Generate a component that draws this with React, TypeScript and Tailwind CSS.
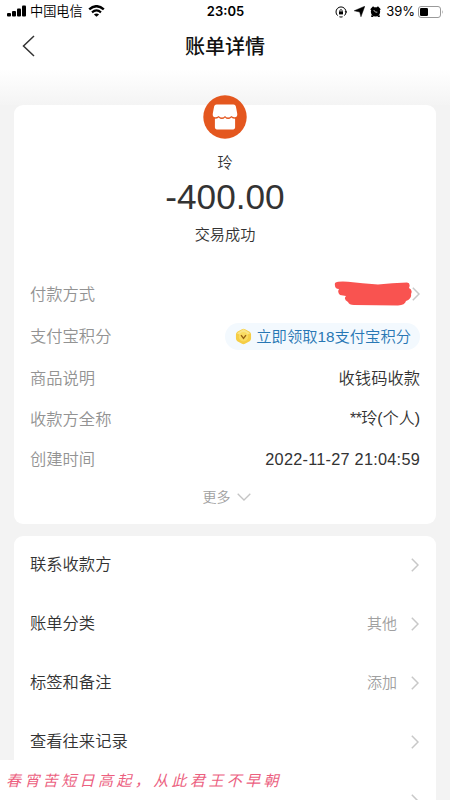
import React from "react";

type ChevronProps = { className?: string };

const Chevron: React.FC<ChevronProps> = ({ className = "" }) => (
  <svg viewBox="0 0 8 14" fill="none" className={`h-[14px] w-2 shrink-0 ${className}`}>
    <path d="M0.8 0.8 L7 7 L0.8 13.2" stroke="#c8c8c8" strokeWidth="1.5" />
  </svg>
);

const StatusBar: React.FC = () => (
  <div className="flex h-[23px] items-center text-black">
    <div className="flex flex-1 items-center pl-[7px]">
      <svg viewBox="0 0 19 12" className="h-3 w-[19px]">
        <rect x="0" y="8" width="4" height="3.5" rx="1" />
        <rect x="5" y="6" width="4" height="5.5" rx="1" />
        <rect x="10" y="3.5" width="4" height="8" rx="1" />
        <rect x="15" y="0.5" width="4" height="11" rx="1" />
      </svg>
      <span className="ml-1 text-[13.2px] font-[350] leading-none">中国电信</span>
      <svg viewBox="0 0 17 12" className="ml-[5px] h-3 w-[17px]" fill="none" stroke="black">
        <path d="M1.2 4.4 Q8.5 -2 15.8 4.4" strokeWidth="2.4" />
        <path d="M4 7.3 Q8.5 3.5 13 7.3" strokeWidth="2.2" />
        <path d="M8.5 11.8 L5.9 9.4 Q8.5 7.4 11.1 9.4 Z" fill="black" stroke="none" />
      </svg>
    </div>
    <span className="font-['Inter','Liberation_Sans',sans-serif] text-[13px] font-semibold leading-none">
      23:05
    </span>
    <div className="flex flex-1 items-center justify-end pr-[6px]">
      <svg viewBox="0 0 12 12" className="h-3 w-3" fill="none" stroke="black">
        <path d="M2.6 9.6 A5 5 0 1 1 9.4 9.6" strokeWidth="1" />
        <path d="M4.4 10.8 Q6 11.3 7.6 10.8" strokeWidth="1" />
        <path d="M4.8 5.6 V4.8 a1.2 1.2 0 0 1 2.4 0 V5.6" strokeWidth="0.8" />
        <rect x="4" y="5.4" width="4" height="3" fill="black" stroke="none" />
        <path d="M10 5 L11.2 6.6 L12 5" strokeWidth="0.8" />
      </svg>
      <svg viewBox="0 0 12 12" className="ml-[7px] h-[11px] w-[11px]">
        <path d="M11.8 0.2 L7.6 11.8 L6.2 6.6 L0.2 5.2 Z" stroke="black" strokeWidth="0.5" />
      </svg>
      <svg viewBox="0 0 12 12" className="ml-[5px] h-[11px] w-[11px]">
        <circle cx="6" cy="6.4" r="5.1" />
        <path d="M0.3 3.6 L3.3 0.3 L5 1.6 L1.4 5 Z M11.7 3.6 L8.7 0.3 L7 1.6 L10.6 5 Z" />
        <path d="M1.8 9.2 L1.2 12 H4 Z M10.2 9.2 L10.8 12 H8 Z" />
        <path d="M4 4.4 L6 6.7 H8" fill="none" stroke="white" strokeWidth="0.8" />
      </svg>
      <span className="ml-[5px] font-['Inter','Liberation_Sans',sans-serif] text-[13px] leading-none">
        39%
      </span>
      <svg viewBox="0 0 26 12" className="ml-[3px] h-3 w-[26px]" fill="none">
        <rect x="0.5" y="0.5" width="22" height="11" rx="2.5" stroke="#9a9a9a" />
        <rect x="2" y="2" width="8" height="8" rx="1.3" fill="black" />
        <path d="M24.3 4 Q25.8 6 24.3 8 Z" fill="#9a9a9a" />
      </svg>
    </div>
  </div>
);

const NavBar: React.FC = () => (
  <div className="flex h-[46px] items-center px-[22px]">
    <svg viewBox="0 0 13 22" fill="none" className="h-[22px] w-[13px]">
      <path d="M12 1 L1.5 11 L12 21" stroke="#333" strokeWidth="1.5" />
    </svg>
    <h1 className="flex-1 pr-[13px] pt-px text-center text-[20px] font-medium leading-none text-[#111]">
      账单详情
    </h1>
  </div>
);

const ShopIcon: React.FC = () => (
  <svg viewBox="0 0 44 44" className="h-11 w-11">
    <circle cx="22" cy="22" r="21.7" fill="#e4571f" />
    <path
      d="M13.5 9.6 H30.5 Q32.4 9.6 32.9 11.4 L34.2 18.4 Q34.8 22 31.7 22.2 Q29.6 22.4 28.3 21.1 Q27 22.6 25.1 22.6 Q23.2 22.6 22 21.1 Q20.8 22.6 18.9 22.6 Q17 22.6 15.7 21.1 Q14.4 22.4 12.3 22.2 Q9.2 22 9.8 18.4 L11.1 11.4 Q11.6 9.6 13.5 9.6 Z"
      fill="white"
    />
    <path
      d="M11.9 23.8 Q14.4 23.8 15.7 22.6 Q17 24.1 18.9 24.1 Q20.8 24.1 22 22.6 Q23.2 24.1 25.1 24.1 Q27 24.1 28.3 22.6 Q29.6 23.8 32.1 23.8 V32.6 Q32.1 34.4 30.3 34.4 H13.7 Q11.9 34.4 11.9 32.6 Z"
      fill="white"
    />
  </svg>
);

const Redaction: React.FC = () => (
  <svg viewBox="0 0 78 26" className="h-[26px] w-[78px]">
    <path
      d="M1 2 Q0 8 5 8 Q3 11 6 14 L12 15 Q9 18 14 21 Q15 24 20 24 L64 24.5 Q71 24 72 20 Q78 18 77 13 Q79 9 75 7 Q77 2 73 1.5 Q58 2 44 3.5 Q28 2.5 14 0.8 Q4 0 1 2 Z"
      fill="#f95350"
    />
  </svg>
);

const PointsBadge: React.FC = () => (
  <div className="flex h-[27px] items-center rounded-full bg-[#f3f9fe] pl-[10px] pr-[9px] text-[#2877b4]">
    <svg viewBox="0 0 18 18" className="h-[17px] w-[17px]">
      <path
        d="M7.4 1.2 Q9 0.2 10.6 1.2 L15.5 4 Q17 5 17 6.8 V11.2 Q17 13 15.5 14 L10.6 16.8 Q9 17.8 7.4 16.8 L2.5 14 Q1 13 1 11.2 V6.8 Q1 5 2.5 4 Z"
        fill="#f5cd45"
      />
      <path d="M9 1 L16 5.5 L9 9.2 L2 5.5 Z" fill="#fae486" />
      <circle cx="9" cy="9.3" r="5" fill="#f9db61" />
      <path d="M6.4 7.6 L9 11 L11.6 7.6" fill="none" stroke="#996415" strokeWidth="1.5" />
    </svg>
    <span className="ml-1 text-[15.3px] leading-none">立即领取18支付宝积分</span>
  </div>
);

const details = [
  { label: "付款方式", height: "h-[42px]", value: <div className="flex items-center"><Redaction /><Chevron /></div> },
  { label: "支付宝积分", height: "h-[43px]", value: <PointsBadge /> },
  { label: "商品说明", height: "h-[41px]", value: "收钱码收款" },
  { label: "收款方全称", height: "h-10", value: <span className="text-[16px]"><span className="tracking-[-0.6px]">**</span>玲(个人)</span> },
  { label: "创建时间", height: "h-[41px]", value: <span className="tracking-[0.25px]">2022-11-27 21:04:59</span> },
];

const actions = [
  { label: "联系收款方", value: "" },
  { label: "账单分类", value: "其他" },
  { label: "标签和备注", value: "添加" },
  { label: "查看往来记录", value: "" },
  { label: "", value: "" },
];

const App: React.FC = () => {
  return (
    <div className="relative flex h-[800px] w-[450px] flex-col overflow-hidden bg-[#f3f3f3] font-['Liberation_Sans','Noto_Sans_CJK_SC',sans-serif] text-[#333]">
      {/* Header */}
      <div className="shrink-0 bg-white">
        <StatusBar />
        <NavBar />
      </div>
      <div className="h-9 shrink-0 bg-linear-to-b from-white to-[#f4f4f4]" />

      {/* Bill card */}
      <div className="mx-[14px] h-[419px] shrink-0 rounded-[9px] bg-white px-4">
        <div className="-mt-[10px] flex flex-col items-center font-[350]">
          <ShopIcon />
          <div className="mt-[15px] text-[15px] leading-[18px]">玲</div>
          <div className="mt-[7px] text-[35.2px] leading-9">-400.00</div>
          <div className="mt-[10px] text-[15.2px] leading-5">交易成功</div>
        </div>
        <div className="mt-7 font-[350]">
          {details.map((item) => (
            <div key={item.label} className={`flex items-center justify-between text-[16.3px] leading-none ${item.height}`}>
              <span className="text-[#939393]">{item.label}</span>
              {typeof item.value === "string" ? <span>{item.value}</span> : item.value}
            </div>
          ))}
        </div>
        <div className="mt-[7px] flex items-center justify-center pl-[3px] text-[14px] font-[350] leading-5 text-[#a0a0a0]">
          更多
          <svg viewBox="0 0 14 8" fill="none" className="ml-[6px] h-2 w-[14px]">
            <path d="M0.7 0.7 L7 7 L13.3 0.7" stroke="#c4c4c4" strokeWidth="1.3" />
          </svg>
        </div>
      </div>

      {/* Actions */}
      <div className="mx-[14px] mt-3 h-[264px] shrink-0 overflow-hidden rounded-t-[9px] bg-white px-4">
        <div className="-mt-px">
          {actions.map((item) => (
            <div key={item.label} className="flex h-[59px] items-center text-[16.3px] font-[350] leading-none">
              <span className="flex-1">{item.label}</span>
              <span className="mr-[14px] text-[15px] text-[#a0a0a0]">{item.value}</span>
              <Chevron className="mr-px" />
            </div>
          ))}
        </div>
      </div>

      {/* Caption */}
      <div className="absolute bottom-0 left-0 flex h-10 w-[290px] items-center bg-white pb-[2px] pl-[6px] font-['Noto_Sans_CJK_SC',sans-serif] text-[15px] italic leading-none tracking-[3.4px] text-[#ec5f7f]">
        春宵苦短日高起，从此君王不早朝
      </div>
    </div>
  );
};

export default App;
